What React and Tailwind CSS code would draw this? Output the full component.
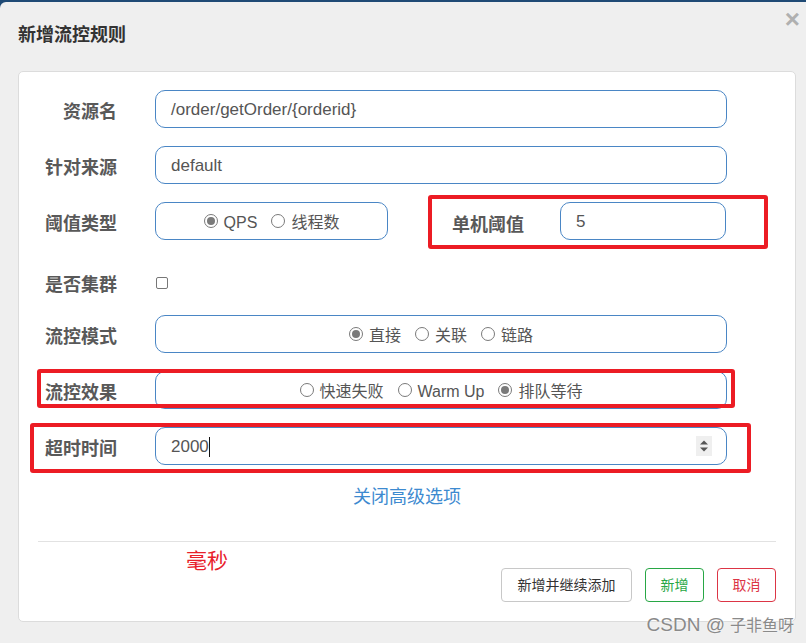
import React from "react";

const FONT = { fontFamily: '"Liberation Sans", "Noto Sans CJK SC", sans-serif' };

function Radio({ checked, label }) {
  return (
    <span className="flex items-center gap-[6px]">
      <span className="w-[14px] h-[14px] rounded-full border border-[#7a7a7a] bg-white flex items-center justify-center">
        {checked && <span className="w-[8px] h-[8px] rounded-full bg-[#7a7a7a]" />}
      </span>
      <span className="text-[16px] text-[#555] pt-[4px]">{label}</span>
    </span>
  );
}

function Label({ children }) {
  return (
    <div className="w-[98px] text-right text-[18px] font-bold text-[#595959] leading-[26px] pt-[6px]">
      {children}
    </div>
  );
}

function RedBox({ className }) {
  return <div className={"absolute border-4 border-[#ec1c24] rounded-[3px] pointer-events-none " + className} />;
}

export default function App() {
  return (
    <div className="w-[806px] h-[643px] bg-[#1f4a75] overflow-hidden" style={FONT}>
      <div className="relative mt-[2px] h-[641px] bg-[#efefef] rounded-tl-[6px]">
        <div className="h-[69px] pl-[18px] pt-[20px]">
          <div className="text-[18px] font-bold text-[#333] leading-[26px]">新增流控规则</div>
        </div>
        <div className="absolute right-[6px] top-[4px] text-[26px] font-bold text-[#b0b0b0] leading-[26px]">×</div>

        <div className="mx-[18px] w-[778px] bg-white border border-[#dcdcdc] rounded-[5px]">
          <div className="flex flex-col gap-[18px] pt-[18px]">
            <div className="relative flex items-center h-[38px]">
              <Label>资源名</Label>
              <div className="ml-[38px] w-[572px] h-[38px] border border-[#4a86c5] rounded-[10px] flex items-center px-[15px] pt-[2px] text-[17px] text-[#555]">
                /order/getOrder/{"{orderid}"}
              </div>
            </div>

            <div className="relative flex items-center h-[38px]">
              <Label>针对来源</Label>
              <div className="ml-[38px] w-[572px] h-[38px] border border-[#4a86c5] rounded-[10px] flex items-center px-[15px] pt-[2px] text-[17px] text-[#555]">
                default
              </div>
            </div>

            <div className="relative flex items-center h-[38px]">
              <Label>阈值类型</Label>
              <div className="ml-[38px] w-[233px] h-[38px] border border-[#4a86c5] rounded-[10px] flex items-center justify-center gap-[14px]">
                <Radio checked label="QPS" />
                <Radio label="线程数" />
              </div>
              <div className="ml-[64px] text-[18px] font-bold text-[#595959] leading-[26px] pt-[8px]">单机阈值</div>
              <div className="ml-[36px] w-[166px] h-[38px] border border-[#4a86c5] rounded-[10px] flex items-center px-[15px] pt-[2px] text-[17px] text-[#555]">
                5
              </div>
              <RedBox className="left-[409px] top-[-7px] w-[340px] h-[54px]" />
            </div>

            <div className="relative flex items-center h-[39px] pt-[8px]">
              <Label>是否集群</Label>
              <div className="ml-[39px] w-[12px] h-[12px] border border-[#777] rounded-[2px] bg-white mt-[2px]" />
            </div>

            <div className="relative flex items-center h-[38px]">
              <Label>流控模式</Label>
              <div className="ml-[38px] w-[572px] h-[38px] border border-[#4a86c5] rounded-[10px] flex items-center justify-center gap-[14px]">
                <Radio checked label="直接" />
                <Radio label="关联" />
                <Radio label="链路" />
              </div>
            </div>

            <div className="relative flex items-center h-[38px]">
              <Label>流控效果</Label>
              <div className="ml-[38px] w-[572px] h-[38px] border border-[#4a86c5] rounded-[10px] flex items-center justify-center gap-[14px]">
                <Radio label="快速失败" />
                <Radio label="Warm Up" />
                <Radio checked label="排队等待" />
              </div>
              <RedBox className="left-[18px] top-[-2px] w-[698px] h-[39px]" />
            </div>

            <div className="relative flex items-center h-[38px]">
              <Label>超时时间</Label>
              <div className="ml-[38px] w-[572px] h-[38px] border border-[#4a86c5] rounded-[10px] flex items-center pl-[15px] pr-[14px] text-[17px] text-[#555]">
                <span className="pt-[2px]">2000</span>
                <span className="w-[1px] h-[20px] bg-[#111] mt-[2px]" />
                <span className="ml-auto w-[16px] h-[20px] bg-[#efefef] flex items-center justify-center">
                  <svg width="10" height="14" viewBox="0 0 10 14">
                    <path d="M1 5.5 L5 1.5 L9 5.5 Z" fill="#555" />
                    <path d="M1 8.5 L5 12.5 L9 8.5 Z" fill="#555" />
                  </svg>
                </span>
              </div>
              <RedBox className="left-[11px] top-[-4px] w-[721px] h-[50px]" />
            </div>
          </div>

          <div className="mt-[19px] text-center text-[18px] leading-[26px] text-[#3d8ad0]">关闭高级选项</div>

          <div className="mx-[19px] mt-[31px] border-t border-[#e2e2e2]" />

          <div className="flex justify-between items-start px-[19px] pt-[5px] pb-[19px]">
            <div className="ml-[148px] text-[21px] leading-[28px] text-[#e8202a]">毫秒</div>
            <div className="mt-[21px] flex gap-[13px]">
              <div className="w-[131px] h-[34px] border border-[#c8c8c8] rounded-[4px] flex items-center justify-center text-[14px] text-[#333]">新增并继续添加</div>
              <div className="w-[59px] h-[34px] border border-[#28a745] rounded-[4px] flex items-center justify-center text-[14px] text-[#28a745]">新增</div>
              <div className="w-[59px] h-[34px] border border-[#dc3545] rounded-[4px] flex items-center justify-center text-[14px] text-[#dc3545]">取消</div>
            </div>
          </div>
        </div>

        <div className="absolute right-[12px] bottom-[6px] flex items-baseline text-[#8a8a8a] leading-[22px]" style={{ textShadow: "0 0 2px #fff" }}>
          <span className="text-[19px] mr-[5px]">CSDN @</span>
          <span className="text-[16px]">子非鱼呀</span>
        </div>
      </div>
    </div>
  );
}
